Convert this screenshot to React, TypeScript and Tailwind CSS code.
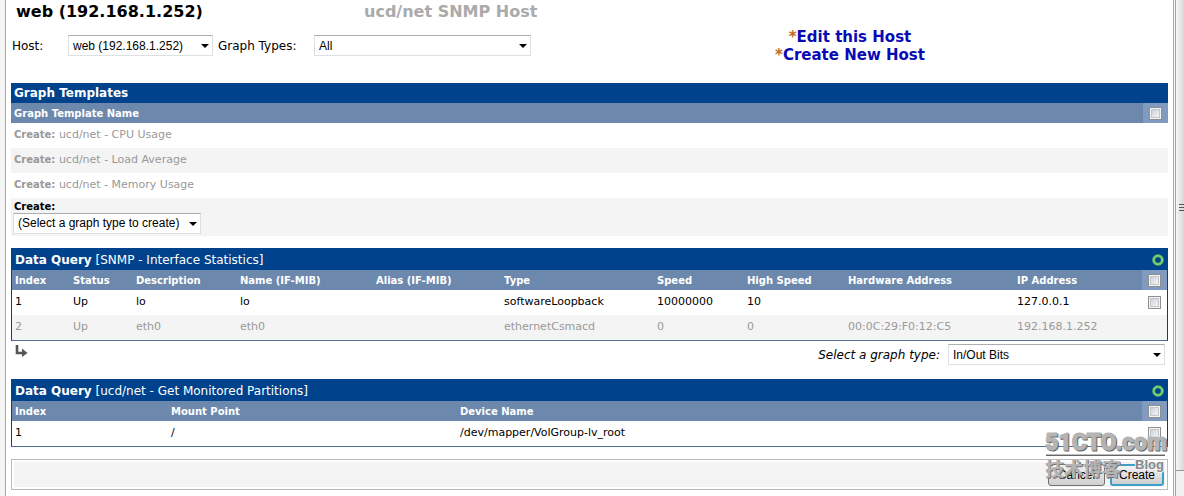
import React from 'react';
import clsx from 'clsx';

interface Column {
  label: string;
  width: string;
}

interface QueryRow {
  cells: string[];
  disabled?: boolean;
}

interface DataQueryProps {
  name: string;
  columns: Column[];
  rows: QueryRow[];
}

const graphTemplates = ['ucd/net - CPU Usage', 'ucd/net - Load Average', 'ucd/net - Memory Usage'];

const interfaceColumns: Column[] = [
  { label: 'Index', width: 'w-[58px]' },
  { label: 'Status', width: 'w-[63px]' },
  { label: 'Description', width: 'w-[104px]' },
  { label: 'Name (IF-MIB)', width: 'w-[136px]' },
  { label: 'Alias (IF-MIB)', width: 'w-[128px]' },
  { label: 'Type', width: 'w-[153px]' },
  { label: 'Speed', width: 'w-[90px]' },
  { label: 'High Speed', width: 'w-[101px]' },
  { label: 'Hardware Address', width: 'w-[169px]' },
  { label: 'IP Address', width: '' },
];

const interfaceRows: QueryRow[] = [
  { cells: ['1', 'Up', 'lo', 'lo', '', 'softwareLoopback', '10000000', '10', '', '127.0.0.1'] },
  {
    cells: ['2', 'Up', 'eth0', 'eth0', '', 'ethernetCsmacd', '0', '0', '00:0C:29:F0:12:C5', '192.168.1.252'],
    disabled: true,
  },
];

const partitionColumns: Column[] = [
  { label: 'Index', width: 'w-[156px]' },
  { label: 'Mount Point', width: 'w-[289px]' },
  { label: 'Device Name', width: '' },
];

const partitionRows: QueryRow[] = [{ cells: ['1', '/', '/dev/mapper/VolGroup-lv_root'] }];

const Select = ({ id, option, className }: { id: string; option: string; className: string }) => (
  <div className={clsx('relative shrink-0', className)}>
    <select
      id={id}
      className="block h-[21px] w-full appearance-none border border-[#dcdfe4] border-t-[#abadb3] bg-white pr-5 pl-1 font-['Liberation_Sans',Arial,sans-serif] text-xs text-black"
    >
      <option>{option}</option>
    </select>
    <svg viewBox="0 0 8 4" className="pointer-events-none absolute top-[9px] right-1 h-1 w-2">
      <path d="M0 0h8L4 4z" fill="#000" />
    </svg>
  </div>
);

const Checkbox = ({ label }: { label: string }) => (
  <input
    type="checkbox"
    aria-label={label}
    className="mx-auto block size-[13px] appearance-none border border-[#8e8f8f] bg-linear-to-br from-[#c4c8cf] to-white shadow-[inset_0_0_0_1px_#f4f4f4,inset_0_0_0_2px_#c3c7cc]"
  />
);

const DataQuery = ({ name, columns, rows }: DataQueryProps) => (
  <section className="border border-[#00438c] border-b-[#4f6f95]">
    <div className="flex h-[21px] items-center justify-between bg-[#00438c] px-[3px] text-white">
      <h2 className="text-xs">
        <b>Data Query</b> [{name}]
      </h2>
      <button type="button" aria-label="Reload query">
        <svg viewBox="0 0 12 12" className="size-3">
          <circle cx="6" cy="6" r="4.3" fill="none" stroke="#5dbb5d" strokeWidth="3" />
          <circle cx="6" cy="6" r="4.3" fill="none" stroke="#8fdc8f" strokeWidth="1.2" strokeDasharray="2.4 1" />
        </svg>
      </button>
    </div>
    <table className="w-full table-fixed text-left text-[11px]">
      <thead>
        <tr className="h-5 bg-[#6d88ad] text-[10px] text-white">
          {columns.map((col) => (
            <th key={col.label} className={clsx('pl-[3px] whitespace-nowrap', col.width)}>
              {col.label}
            </th>
          ))}
          <th className="w-[25px] bg-[#819bc0]">
            <Checkbox label="Select all" />
          </th>
        </tr>
      </thead>
      <tbody>
        {rows.map((row) => (
          <tr key={row.cells[0]} className={clsx('h-[25px]', row.disabled ? 'bg-[#f4f4f4] text-[#999]' : 'bg-white')}>
            {row.cells.map((cell, i) => (
              <td key={i} className="pl-[3px] whitespace-nowrap">
                {cell}
              </td>
            ))}
            <td>{!row.disabled && <Checkbox label={`Select row ${row.cells[0]}`} />}</td>
          </tr>
        ))}
      </tbody>
    </table>
  </section>
);

const Watermark = () => (
  <svg
    viewBox="0 0 126 58"
    className="pointer-events-none absolute right-1 bottom-3 h-[58px] w-[126px]"
    role="img"
    aria-label="51CTO.com"
  >
    <g strokeLinejoin="round" className="font-[Roboto,'Liberation_Sans',sans-serif] font-black">
      <text x="3" y="25" fontSize="23" fill="#666" stroke="#666" strokeWidth="1">51CTO.com</text>
      <text x="2" y="24" fontSize="23" fill="#b4b4b4" stroke="#b4b4b4" strokeWidth="1">51CTO.com</text>
    </g>
    <path d="M3 28.5h119" stroke="#bbb" />
    <path d="M3 29.5h119" stroke="#666" />
    <g className="font-['Noto_Sans_CJK_SC',sans-serif] font-bold">
      <text x="3" y="51" fontSize="19" fill="#777">技术博客</text>
      <text x="2" y="50" fontSize="19" fill="#b4b4b4">技术博客</text>
    </g>
    <g className="font-['Liberation_Sans',sans-serif] font-bold">
      <text x="92" y="43" fontSize="13" fill="#f4f4f4" stroke="#f4f4f4" strokeWidth="2">Blog</text>
      <text x="92" y="43" fontSize="13" fill="#888">Blog</text>
    </g>
  </svg>
);

const App = () => {
  return (
    <div className="flex min-h-screen bg-white font-['DejaVu_Sans',Verdana,sans-serif] text-black">
      <div className="w-[6px] shrink-0 border-r border-[#a8a8a8] bg-[#f4f4f4]" />

      <main className="relative min-w-0 flex-1 px-[5px]">
        <header className="flex h-[83px]">
          <div className="w-[660px] shrink-0">
            <div className="flex h-6 items-center pl-[5px] text-base font-bold">
              <h1 className="w-[348px]">web (192.168.1.252)</h1>
              <span className="text-[#aaa]">ucd/net SNMP Host</span>
            </div>
            <form className="mt-[11px] flex h-[21px] items-center pl-[1px] text-xs">
              <label htmlFor="host" className="w-14">Host:</label>
              <Select id="host" option="web (192.168.1.252)" className="w-[145px]" />
              <label htmlFor="graph-types" className="w-[101px] pl-[5px] whitespace-nowrap">Graph Types:</label>
              <Select id="graph-types" option="All" className="w-[217px]" />
            </form>
          </div>
          <nav className="w-[358px] pt-7 text-center text-[15px] leading-[18px] font-bold">
            <div>
              <span className="text-[#c16921]">*</span>
              <a href="#edit" className="text-[#0a0ab4]">Edit this Host</a>
            </div>
            <div>
              <span className="text-[#c16921]">*</span>
              <a href="#create" className="text-[#0a0ab4]">Create New Host</a>
            </div>
          </nav>
        </header>

        {/* Graph Templates */}
        <section>
          <h2 className="flex h-5 items-center bg-[#00438c] pl-[3px] text-xs font-bold text-white">Graph Templates</h2>
          <table className="w-full table-fixed text-left text-[11px]">
            <thead>
              <tr className="h-5 bg-[#6d88ad] text-[10px] text-white">
                <th className="pl-[3px]">Graph Template Name</th>
                <th className="w-[25px] bg-[#819bc0]">
                  <Checkbox label="Select all templates" />
                </th>
              </tr>
            </thead>
            <tbody>
              {graphTemplates.map((template) => (
                <tr key={template} className="h-[25px] text-[#999] even:bg-[#f4f4f4]">
                  <td colSpan={2} className="pl-[3px]">
                    <b className="text-[10px]">Create:</b> {template}
                  </td>
                </tr>
              ))}
              <tr className="h-[38px] bg-[#f4f4f4]">
                <td colSpan={2} className="pl-[2px]">
                  <label htmlFor="create-type" className="block pl-[1px] text-[10px] leading-3 font-bold">Create:</label>
                  <Select id="create-type" option="(Select a graph type to create)" className="w-[188px]" />
                </td>
              </tr>
            </tbody>
          </table>
        </section>

        <div className="mt-3">
          <DataQuery name="SNMP - Interface Statistics" columns={interfaceColumns} rows={interfaceRows} />
        </div>

        <div className="flex h-[38px] items-start justify-between pt-[3px] pr-[3px] pl-1">
          <svg viewBox="0 0 13 13" className="size-[13px]">
            <path d="M2 1v8h6" fill="none" stroke="#555" strokeWidth="2.6" />
            <path d="M7 4.5l5.5 4.5L7 13z" fill="#555" />
          </svg>
          <div className="flex items-center">
            <label htmlFor="graph-type" className="pr-2 text-xs italic">Select a graph type:</label>
            <Select id="graph-type" option="In/Out Bits" className="w-[217px]" />
          </div>
        </div>

        <DataQuery name="ucd/net - Get Monitored Partitions" columns={partitionColumns} rows={partitionRows} />

        <footer className="mt-3 border border-[#bbb] bg-white p-[2px]">
          <div className="flex h-[25px] items-center justify-end gap-[5px] bg-[#f4f4f4] pr-[1px] font-['Liberation_Sans',Arial,sans-serif] text-xs">
            <button type="button" className="h-[22px] w-[57px] rounded-[3px] border border-[#707070] bg-linear-to-b from-[#f2f2f2] to-[#cfcfcf]">
              Cancel
            </button>
            <button type="button" className="h-[22px] w-[54px] rounded-[3px] border-2 border-[#3c9fc8] bg-linear-to-b from-[#f2f2f2] to-[#cfcfcf]">
              Create
            </button>
          </div>
        </footer>

        <Watermark />
      </main>

      {/* Window scrollbar */}
      <div className="flex w-[11px] shrink-0 border-l border-[#a8a8a8]">
        <div className="w-px bg-white" />
        <div className="flex flex-1 flex-col border-l border-[#a0a0a0] bg-[#f0f0f0]">
          <div className="flex h-[471px] items-center justify-end border-b border-[#999] bg-linear-to-r from-[#f6f6f6] to-[#d8d8d8]">
            <svg viewBox="0 0 5 8" className="mt-[-54px] h-2 w-[5px]">
              <path d="M0 .5h5M0 3.5h5M0 6.5h5" stroke="#555" />
            </svg>
          </div>
        </div>
      </div>
    </div>
  );
};

export default App;
